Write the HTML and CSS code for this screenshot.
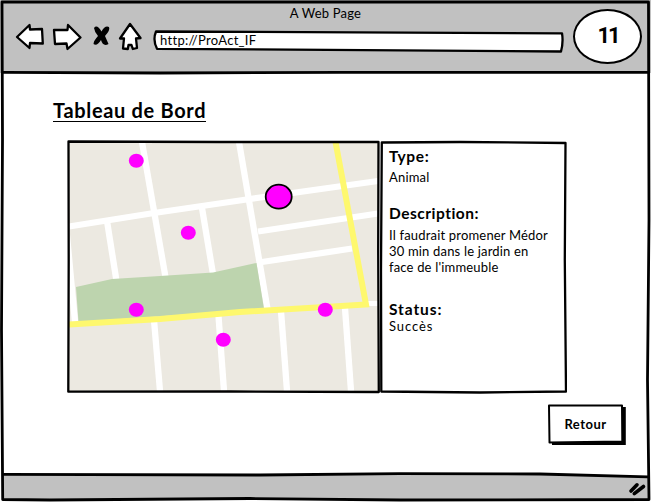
FILE: index.html
```html
<!DOCTYPE html>
<html lang="fr">
<head>
<meta charset="utf-8">
<title>A Web Page</title>
<link rel="stylesheet" href="styles.css">
</head>
<body>
<div class="window">
  <header class="toolbar">
    <div class="window-title">A Web Page</div>
    <nav class="nav">
      <svg class="icons" width="128" height="32" viewBox="14 22 128 32">
        <g fill="#fff" stroke="#000" stroke-width="2.300" stroke-linejoin="round">
          <path d="M17 37 L29.500 25 L30 29.500 L42 29 L42.800 43.500 L30 43 L29.500 48 Z"/>
          <path d="M54 30 L67.500 30 L68 25 L80.500 37.500 L67.500 49 L66.500 43.500 L55 44 Z"/>
          <path d="M130 24 L140.500 38 L136 38.500 L137 48 L132.800 49 L131.500 45 L128.500 45 L127.800 49 L123 48.500 L124 38.500 L120 38.500 Z"/>
        </g>
        <path d="M94 28 Q97 24 101.500 31.500 Q105 25 109 27 Q110.500 30 105 36 L108.500 44 Q103 47 101 40 Q97 46.500 93.500 44 Q93.500 41 98 36 Q94.500 32 94 28 Z"/>
      </svg>
      <div class="address">
        <svg class="outline" width="412" height="24" viewBox="153 29 412 24">
          <path d="M156 31.500 L562 33.300 Q563.500 42 561 51.500 L157 48.800 Q152.500 40 156 31.500 Z" fill="#fff" stroke="#000" stroke-width="2.300" stroke-linejoin="round"/>
        </svg>
        <span class="url">http://ProAct_IF</span>
      </div>
      <div class="counter"><span>11</span></div>
    </nav>
  </header>
  <main class="page">
    <h1><span>Tableau de Bord</span></h1>
    <div class="columns">
      <svg class="map" width="313" height="256" viewBox="67 139 313 256">
        <path d="M69 142 H378 V391 H69 Z" fill="#ece9e1"/>
        <g fill="none" stroke="#fff" stroke-width="6.300">
          <path d="M69 226.500 L154 213 L250 199 L378 181"/>
          <path d="M142 142 L166 280"/>
          <path d="M239 142 L267.500 309"/>
          <path d="M107 221 L116.500 281"/>
          <path d="M202 208 L213 274"/>
          <path d="M66 225 L75 322"/>
          <path d="M258 231.500 L378 213.500"/>
          <path d="M262 262 L352 248.500"/>
          <path d="M154 320 L160 391"/>
          <path d="M218.500 316 L224 391"/>
          <path d="M281 311 L287 391"/>
          <path d="M345 308 L351 391"/>
          <path d="M365 303.500 H378" stroke-width="5"/>
        </g>
        <path d="M76 287 L112 279 L160 276 L213 272.500 L256.500 263 L264 309 L78.500 322 Z" fill="#bdd4ae"/>
        <path d="M69 324.500 L160 319 L240 312 L366 304.500 L335.500 142" fill="none" stroke="#fef86e" stroke-width="6"/>
        <g fill="#f0f">
          <ellipse cx="136.300" cy="160.700" rx="7.500" ry="7"/>
          <ellipse cx="188.300" cy="232.700" rx="7.500" ry="7"/>
          <ellipse cx="136.300" cy="309.700" rx="7.500" ry="7"/>
          <ellipse cx="223.300" cy="339.700" rx="7.500" ry="7"/>
          <ellipse cx="325.300" cy="309.700" rx="7.500" ry="7"/>
          <ellipse cx="278.700" cy="196.700" rx="13" ry="12" stroke="#000" stroke-width="1.800"/>
        </g>
        <path d="M68.500 141.500 L220 142 L378.500 142 L378.200 250 L378.800 392 L230 391.500 L68.300 391.700 L68.700 260 Z" fill="none" stroke="#000" stroke-width="2.300" stroke-linejoin="round"/>
      </svg>
      <section class="details">
        <svg class="outline" width="187" height="256" viewBox="380 139 187 256">
          <path d="M381.800 142.500 L460 142 L565.500 143 L564.800 260 L566 391.500 L480 392.500 L381.300 391.500 L381 270 Z" fill="#fff" stroke="#000" stroke-width="2.300" stroke-linejoin="round"/>
        </svg>
        <h2 class="type">Type:</h2>
        <p class="animal">Animal</p>
        <h2 class="description">Description:</h2>
        <p class="lines">Il faudrait promener Médor<br>30 min dans le jardin en<br>face de l'immeuble</p>
        <h2 class="status">Status:</h2>
        <p class="result">Succès</p>
      </section>
    </div>
    <button class="back" type="button">
      <svg class="outline" width="80" height="42" viewBox="547 404 80 42">
        <path d="M552 407 H625.800 V445 H552 Z"/>
        <path d="M549 405.500 L622 405.500 L622.300 441.500 L549.500 442.500 Z" fill="#fff" stroke="#000" stroke-width="2" stroke-linejoin="round"/>
      </svg>
      <span>Retour</span>
    </button>
  </main>
  <footer class="statusbar"></footer>
  <svg class="frame" width="651" height="502" viewBox="0 0 651 502">
    <path d="M3 474.500 L260 475 L400 473.700 L540 474 L648 477 V499 H3 Z" fill="#c1c1c1"/>
    <g fill="none" stroke="#000" stroke-width="2.800" stroke-linejoin="round">
      <path d="M2 2 L648.500 2 L649 220 L647.500 380 L649 499.500 L400 500 L250 498.500 L50 500 L2.700 499.500 L1.500 330 L2.500 140 Z"/>
      <path d="M3 72.300 L160 73 L340 72.300 L648 72.300"/>
      <path d="M3 474.300 L260 475 L400 473.700 L540 474 L648 476.800"/>
    </g>
    <path d="M631 491 L637 484.800 M634.300 493.700 L643.500 486.500" stroke="#000" stroke-width="3.600" stroke-linecap="round"/>
  </svg>
</div>
</body>
</html>
```
FILE: styles.css
```css
* { box-sizing: border-box; }
body { margin: 0; background: #fff; color: #000; font-family: Lato, "Liberation Sans", sans-serif; }
.window { position: relative; display: flex; flex-direction: column; width: 651px; height: 502px; overflow: hidden; }
.toolbar { height: 73px; padding: 5px 3px 0; background: #c1c1c1; }
.window-title { height: 17px; line-height: 16px; font-size: 13px; text-align: center; letter-spacing: 0.2px; }
.nav { display: flex; height: 32px; padding-left: 11px; }
.icons { flex: none; }
.address { position: relative; width: 412px; height: 24px; margin: 7px 0 0 11px; }
.outline { position: absolute; top: 0; left: 0; }
.url { position: relative; display: block; padding-left: 7px; font-size: 13px; line-height: 23px; letter-spacing: 0.3px; }
.counter { display: flex; align-items: center; justify-content: center; flex: none; width: 69px; height: 55px; margin: -13px 0 0 8px; padding: 0 0 1px 1px; border: 2px solid #000; border-radius: 50%; background: #fff; font: bold 22px/22px Roboto, "Liberation Sans", sans-serif; letter-spacing: -2px; }
.page { flex: 1; display: flex; flex-direction: column; }
h1, h2, p { margin: 0; }
h1 { height: 66px; padding: 26px 0 0 53px; font-size: 20px; line-height: 22px; letter-spacing: 0.67px; }
h1 span { display: inline-block; border-bottom: 1px solid #000; }
.columns { display: flex; height: 256px; padding-left: 67px; }
.map { flex: none; }
.details { position: relative; width: 187px; padding: 7px 0 0 9px; }
.details h2, .details p { position: relative; white-space: nowrap; }
.details h2 { height: 20px; font-size: 15.500px; line-height: 20px; letter-spacing: 0.6px; }
.details p { font-size: 13px; line-height: 16px; letter-spacing: 0.18px; }
.details .animal { margin-top: 3px; }
.details .description { margin-top: 18px; letter-spacing: 0.5px; }
.details .lines { margin-top: 4px; }
.details .status { margin-top: 24px; letter-spacing: 0.9px; }
.details .result { margin-top: -1px; letter-spacing: 0.9px; }
.back { position: relative; align-self: flex-end; width: 80px; height: 42px; margin: 9px 24px 0 0; padding: 0 3px 2px 0; border: 0; background: none; color: #000; font: bold 13px/16px Lato, "Liberation Sans", sans-serif; letter-spacing: 0.5px; }
.back span { position: relative; }
.statusbar { height: 28px; background: #fff; }
.frame { position: absolute; top: 0; left: 0; pointer-events: none; }
```
